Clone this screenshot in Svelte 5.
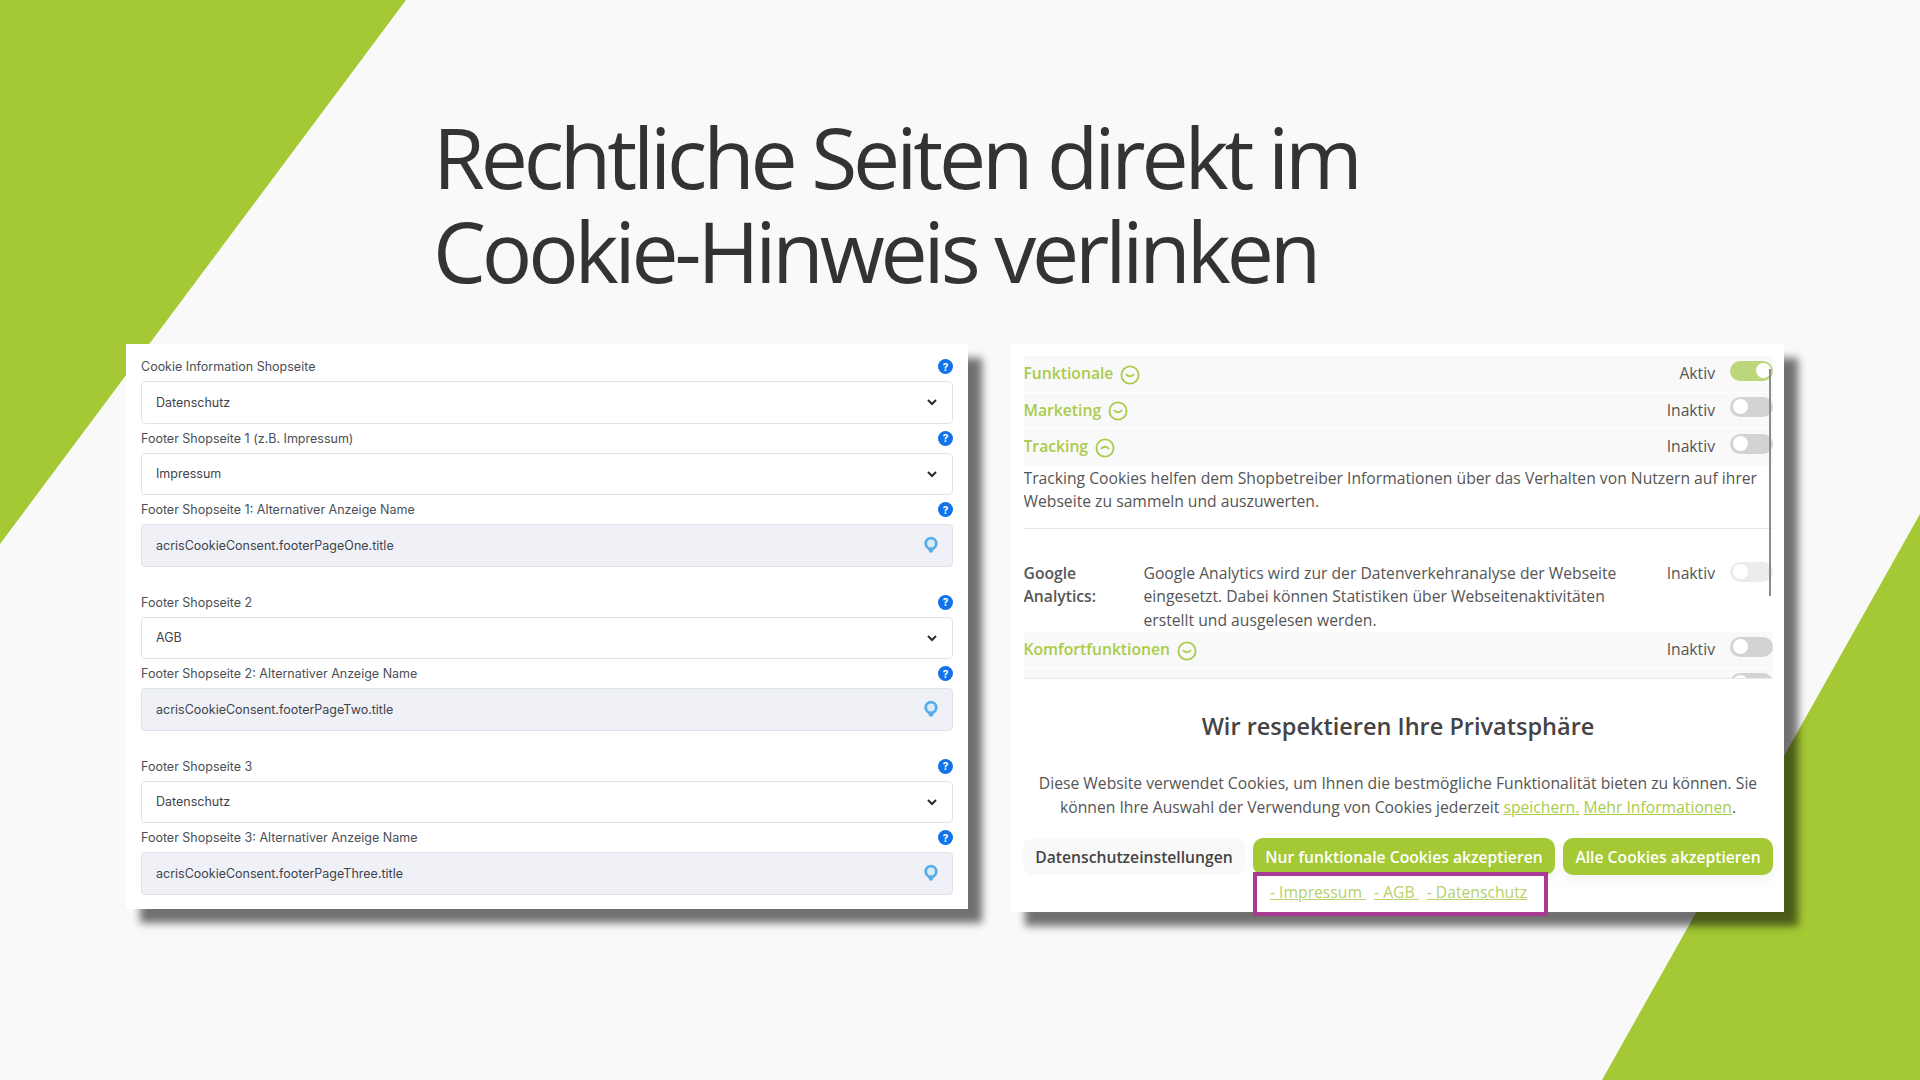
<script>
    let fields = [
        { label: "Cookie Information Shopseite", value: "Datenschutz", type: "select" },
        { label: "Footer Shopseite 1 (z.B. Impressum)", value: "Impressum", type: "select" },
        { label: "Footer Shopseite 1: Alternativer Anzeige Name", value: "acrisCookieConsent.footerPageOne.title", type: "input" },
        { label: "Footer Shopseite 2", value: "AGB", type: "select" },
        { label: "Footer Shopseite 2: Alternativer Anzeige Name", value: "acrisCookieConsent.footerPageTwo.title", type: "input" },
        { label: "Footer Shopseite 3", value: "Datenschutz", type: "select" },
        { label: "Footer Shopseite 3: Alternativer Anzeige Name", value: "acrisCookieConsent.footerPageThree.title", type: "input" }
    ];
</script>

<div class="slide">
    <svg class="bg" width="1920" height="1080" viewBox="0 0 1920 1080">
        <polygon points="0,0 406,0 0,544" fill="#a5c935" />
        <polygon points="1920,514 1920,1080 1602,1080" fill="#a5c935" />
    </svg>

    <h1>Rechtliche Seiten direkt im<br />Cookie-Hinweis verlinken</h1>

    <div class="cards">
        <div class="card admin">
            {#each fields as f}
                <div class="field" class:has-input={f.type === "input"}>
                    <div class="label-row">
                        <span>{f.label}</span>
                        <span class="help">?</span>
                    </div>
                    <div class="control" class:filled={f.type === "input"}>
                        <span>{f.value}</span>
                        {#if f.type === "select"}
                            <svg width="12" height="12" viewBox="0 0 12 12"><path d="M2 4l4 4 4-4" fill="none" stroke="#2b2b33" stroke-width="2" /></svg>
                        {:else}
                            <svg width="16" height="18" viewBox="0 0 16 18">
                                <circle cx="8" cy="7.5" r="5.3" fill="#d8ecfa" stroke="#5aace8" stroke-width="2.8" />
                                <path d="M5 13h6l-1.5 3.5h-3z" fill="#5aace8" />
                            </svg>
                        {/if}
                    </div>
                </div>
            {/each}
        </div>

        <div class="card consent">
            <div class="scroll">
                <div class="row">
                    <span class="cat">Funktionale</span>
                    <svg class="chev" width="20" height="20" viewBox="0 0 20 20"><circle cx="10" cy="10" r="8.6" /><path d="M6 9c2 3 6 3 8 0" /></svg>
                    <span class="state">Aktiv</span>
                    <span class="toggle on"></span>
                </div>
                <div class="row">
                    <span class="cat">Marketing</span>
                    <svg class="chev" width="20" height="20" viewBox="0 0 20 20"><circle cx="10" cy="10" r="8.6" /><path d="M6 9c2 3 6 3 8 0" /></svg>
                    <span class="state">Inaktiv</span>
                    <span class="toggle"></span>
                </div>
                <div class="row">
                    <span class="cat">Tracking</span>
                    <svg class="chev" width="20" height="20" viewBox="0 0 20 20"><circle cx="10" cy="10" r="8.6" /><path d="M6 11c2-3 6-3 8 0" /></svg>
                    <span class="state">Inaktiv</span>
                    <span class="toggle"></span>
                </div>
                <p class="desc">Tracking Cookies helfen dem Shopbetreiber Informationen über das Verhalten von Nutzern auf ihrer Webseite zu sammeln und auszuwerten.</p>
                <div class="detail">
                    <strong>Google Analytics:</strong>
                    <p>Google Analytics wird zur der Datenverkehranalyse der Webseite eingesetzt. Dabei können Statistiken über Webseitenaktivitäten erstellt und ausgelesen werden.</p>
                    <span class="state">Inaktiv</span>
                    <span class="toggle faded"></span>
                </div>
                <div class="row">
                    <span class="cat">Komfortfunktionen</span>
                    <svg class="chev" width="20" height="20" viewBox="0 0 20 20"><circle cx="10" cy="10" r="8.6" /><path d="M6 9c2 3 6 3 8 0" /></svg>
                    <span class="state">Inaktiv</span>
                    <span class="toggle"></span>
                </div>
                <div class="row clipped">
                    <span class="toggle"></span>
                </div>
                <div class="scrollbar"></div>
            </div>

            <div class="notice">
                <h2>Wir respektieren Ihre Privatsphäre</h2>
                <p>Diese Website verwendet Cookies, um Ihnen die bestmögliche Funktionalität bieten zu können. Sie können Ihre Auswahl der Verwendung von Cookies jederzeit <a href="#s">speichern.</a> <a href="#m">Mehr Informationen</a>.</p>
                <div class="buttons">
                    <button class="plain">Datenschutzeinstellungen</button>
                    <button>Nur funktionale Cookies akzeptieren</button>
                    <button>Alle Cookies akzeptieren</button>
                </div>
                <div class="links">
                    <a href="#i">- Impressum&nbsp;</a>
                    <a href="#a">- AGB&nbsp;</a>
                    <a href="#d">- Datenschutz</a>
                </div>
            </div>
        </div>
    </div>
</div>

<style>
    :global(body) {
        margin: 0;
    }

    .slide {
        position: relative;
        width: 1920px;
        height: 1080px;
        overflow: hidden;
        background-color: #f9f9f9;
        font-family: "Open Sans", sans-serif;
    }

    .bg {
        position: absolute;
        top: 0;
        left: 0;
    }

    h1 {
        position: relative;
        margin: 0;
        padding: 110px 0 0 433px;
        height: 234px;
        font-size: 84px;
        line-height: 94px;
        font-weight: 400;
        letter-spacing: -4.15px;
        color: #333;
    }

    .cards {
        position: relative;
        display: flex;
        align-items: flex-start;
        gap: 43px;
        padding: 0 0 0 126px;
    }

    .card {
        background-color: white;
        box-shadow: 14px 14px 8px rgba(0, 0, 0, 0.55);
    }

    .admin {
        box-sizing: border-box;
        width: 842px;
        height: 565px;
        padding: 8px 15px 0;
        font-family: Inter, sans-serif;
        font-size: 12.5px;
        color: #4a4f57;
    }

    .field.has-input {
        margin-bottom: 21px;
    }

    .label-row {
        display: flex;
        justify-content: space-between;
        align-items: center;
        height: 29px;
    }

    .help {
        display: flex;
        justify-content: center;
        align-items: center;
        width: 15px;
        height: 15px;
        border-radius: 50%;
        background-color: #1272e8;
        color: white;
        font-size: 10px;
        font-weight: 700;
    }

    .control {
        box-sizing: border-box;
        display: flex;
        justify-content: space-between;
        align-items: center;
        height: 42.5px;
        padding: 0 14px;
        border: 1px solid #dfe3e8;
        border-radius: 4px;
        color: #3f444c;
    }

    .control.filled {
        background-color: #f0f1f7;
        padding-right: 13px;
    }

    .consent {
        position: relative;
        box-sizing: border-box;
        width: 773px;
        height: 568px;
        color: #555;
        font-size: 15.7px;
    }

    .scroll {
        position: relative;
        box-sizing: border-box;
        height: 335px;
        margin: 0 11px 0 12.5px;
        padding-top: 12px;
        overflow: hidden;
        border-bottom: 1px solid #e9e9e9;
    }

    .row {
        display: flex;
        align-items: center;
        gap: 7px;
        height: 36.5px;
        padding-bottom: 1px;
        background-color: #f9f9f9;
        border-bottom: 1px solid white;
        box-sizing: border-box;
    }

    .row.clipped {
        justify-content: flex-end;
    }

    .cat {
        font-weight: 600;
        color: #a9cc4a;
    }

    .chev {
        fill: none;
        stroke: #a9cc4a;
        stroke-width: 1.8;
        margin-top: 3px;
    }

    .state {
        margin-left: auto;
        margin-right: 8px;
    }

    .toggle {
        position: relative;
        flex: none;
        width: 43px;
        height: 20px;
        margin-top: -5px;
        border-radius: 10px;
        background-color: #d3d3d3;
    }

    .toggle::after {
        content: "";
        position: absolute;
        top: 2px;
        left: 3px;
        width: 15px;
        height: 15px;
        border-radius: 50%;
        background-color: white;
    }

    .toggle.on {
        background-color: #bcd67a;
    }

    .toggle.on::after {
        left: 26px;
    }

    .toggle.faded {
        background-color: #ececec;
    }

    .desc {
        margin: 0;
        padding: 1px 0 14px;
        line-height: 23.5px;
        border-bottom: 1px solid #e9e9e9;
    }

    .detail {
        display: flex;
        align-items: flex-start;
        padding-top: 33px;
    }

    .detail strong {
        flex: none;
        width: 120px;
        font-weight: 600;
        line-height: 23.5px;
    }

    .detail p {
        width: 500px;
        margin: 0;
        line-height: 23.5px;
    }

    .detail .state {
        line-height: 23.5px;
    }

    .detail .toggle {
        margin-top: 0;
        margin-left: 7px;
    }

    .scrollbar {
        position: absolute;
        top: 25px;
        right: 2px;
        width: 2px;
        height: 227px;
        background-color: #8c8c8c;
    }

    .notice {
        padding: 0 11px 0 12px;
        text-align: center;
    }

    h2 {
        margin: 0;
        padding-top: 30px;
        font-size: 23.5px;
        line-height: 34px;
        font-weight: 600;
        color: #444;
    }

    .notice p {
        margin: 0;
        padding-top: 29px;
        line-height: 23.5px;
    }

    a {
        color: #a9cc4a;
    }

    .buttons {
        display: flex;
        gap: 8px;
        margin-top: 19px;
    }

    button {
        height: 37px;
        padding: 0;
        flex: 1 1 auto;
        border: none;
        border-radius: 10px;
        background-color: #a5c935;
        color: white;
        font-family: inherit;
        font-size: 15.7px;
        font-weight: 600;
        box-shadow: 0 6px 12px rgba(0, 0, 0, 0.05);
    }

    button:nth-child(1) {
        width: 222px;
        flex: none;
        background-color: #f9f9f9;
        color: #444;
        box-shadow: none;
    }

    button:nth-child(2) {
        width: 302px;
        flex: none;
    }

    /* outlined callout sits over the button edge and the card bottom */
    .links {
        position: absolute;
        left: 242px;
        top: 528px;
        box-sizing: border-box;
        display: flex;
        align-items: center;
        gap: 8px;
        width: 295px;
        height: 44px;
        padding: 0 0 4px 13px;
        background-color: white;
        border: 4px solid #a83a92;
    }

    .links a {
        color: #b5d168;
    }
</style>
